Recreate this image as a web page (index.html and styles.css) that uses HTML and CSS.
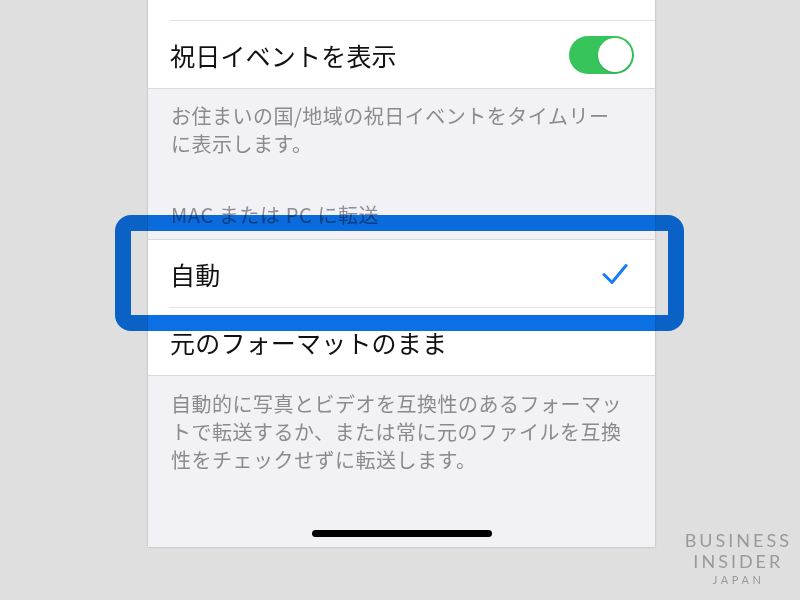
FILE: index.html
```html
<!DOCTYPE html>
<html lang="ja">
<head>
    <meta charset="UTF-8">
    <meta name="viewport" content="width=device-width, initial-scale=1.0">
    <title>写真 設定</title>
    <link rel="stylesheet" href="styles.css">
</head>
<body>
    <div class="screen">
        <div class="group">
            <div class="cell-stub"></div>
            <div class="cell">
                <span>祝日イベントを表示</span>
                <div class="toggle on"><div class="knob"></div></div>
            </div>
        </div>
        <div class="footer first">お住まいの国/地域の祝日イベントをタイムリー<br>に表示します。</div>

        <div class="header">MAC または PC に転送</div>
        <div class="group bordered">
            <div class="cell">
                <span>自動</span>
                <svg class="check" width="26" height="22" viewBox="0 0 26 22">
                    <path d="M2 11.5 L10 19.5 L24 2.5" fill="none" stroke="#167dfa" stroke-width="3" stroke-linecap="round" stroke-linejoin="round"/>
                </svg>
            </div>
            <div class="cell">
                <span>元のフォーマットのまま</span>
            </div>
        </div>
        <div class="footer second">自動的に写真とビデオを互換性のあるフォーマッ<br>トで転送するか、または常に元のファイルを互換<br>性をチェックせずに転送します。</div>

        <div class="home-bar"></div>

        <!-- highlight drawn over the screenshot -->
        <div class="highlight"></div>
    </div>

    <div class="logo">
        <div class="logo-main">BUSINESS</div>
        <div class="logo-main">INSIDER</div>
        <div class="logo-sub">JAPAN</div>
    </div>
</body>
</html>
```

FILE: styles.css
```css
/* Basic styling */
body {
    margin: 0;
    height: 600px;
    overflow: hidden;
    background-color: #dfdfdf;
    font-family: "Noto Sans CJK JP", "Noto Sans", sans-serif;
}

.screen {
    position: relative;
    width: 507px;
    height: 547px;
    margin: 0 0 0 148px;
    background-color: #f1f1f6;
    box-shadow: 0 0 2px rgba(0, 0, 0, 0.25);
    display: flex;
    flex-direction: column;
}

.group {
    background-color: #fff;
    border-bottom: 1px solid #dadade;
}

.group.bordered {
    border-top: 1px solid #dadade;
}

.cell-stub {
    height: 20px;
}

.cell {
    height: 67px;
    margin-left: 22px;
    padding-right: 21px;
    border-top: 1px solid #e2e2e5;
    display: flex;
    align-items: center;
    justify-content: space-between;
    font-size: 25px;
    letter-spacing: 0.2px;
    color: #111;
}

.group.bordered .cell:first-child {
    border-top: none;
}

.toggle {
    width: 65px;
    height: 38px;
    border-radius: 19px;
    background-color: #e5e5ea;
    display: flex;
    align-items: center;
    padding: 0 2px;
    box-sizing: border-box;
}

.toggle.on {
    background-color: #37c45a;
    justify-content: flex-end;
}

.knob {
    width: 34px;
    height: 34px;
    border-radius: 50%;
    background-color: #fff;
    box-shadow: 0 1px 2px rgba(0, 0, 0, 0.15);
}

.check {
    margin-right: 6px;
}

.footer {
    padding: 0 20px 0 23px;
    font-size: 20px;
    letter-spacing: 0.5px;
    line-height: 28px;
    color: #8a8a8f;
}

.footer.first {
    padding-top: 13px;
}

.footer.second {
    padding-top: 14px;
}

.header {
    margin: 45px 0 12px 23px;
    font-size: 20px;
    letter-spacing: 0.6px;
    line-height: 24px;
    color: #8e8e93;
}

.home-bar {
    margin-top: auto;
    margin-bottom: 10px;
    align-self: center;
    width: 180px;
    height: 7px;
    border-radius: 4px;
    background-color: #000;
}

.highlight {
    position: absolute;
    left: -33px;
    top: 215px;
    width: 569px;
    height: 116px;
    box-sizing: border-box;
    border: 16px solid #0b70e4;
    border-radius: 16px;
    mix-blend-mode: multiply;
}

.logo {
    position: absolute;
    right: 11px;
    bottom: 12px;
    text-align: center;
    color: #9a9a9a;
    font-family: "Lato", "Liberation Sans", sans-serif;
}

.logo-main {
    font-size: 18px;
    line-height: 21px;
    letter-spacing: 3px;
    margin-right: -3px;
}

.logo-sub {
    font-size: 11px;
    line-height: 16px;
    letter-spacing: 3.6px;
    margin-right: -3.6px;
}
```
